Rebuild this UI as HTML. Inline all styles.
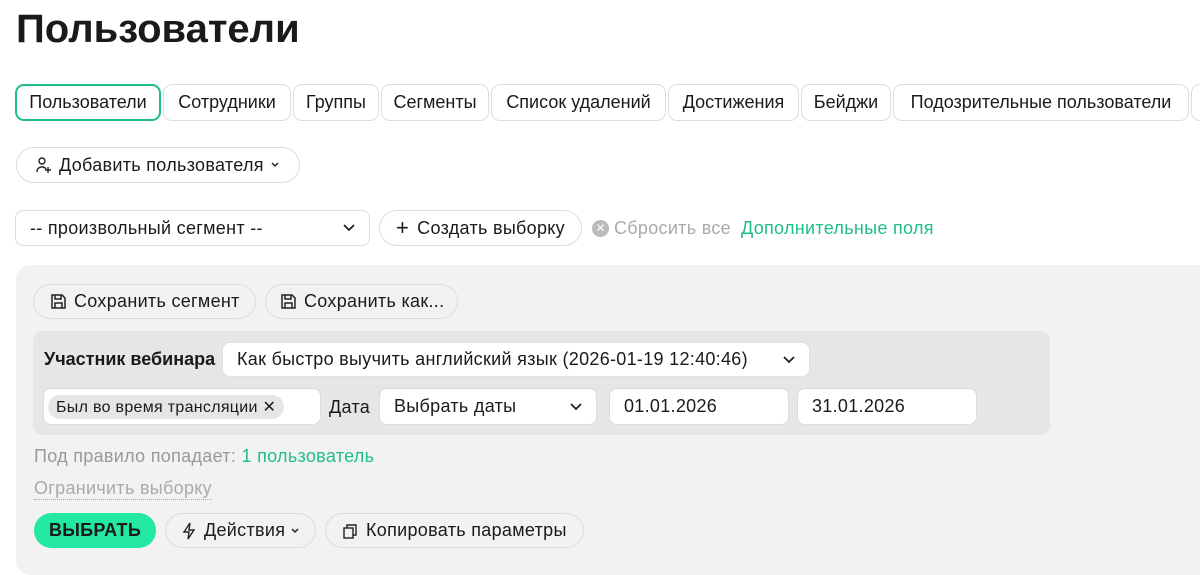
<!DOCTYPE html><html><head><meta charset="utf-8"><style>
*{box-sizing:border-box;margin:0;padding:0}
body{width:1200px;height:563px;overflow:hidden;background:#fff;font-family:"Liberation Sans","DejaVu Sans",sans-serif;color:#1a1a1a;position:relative;letter-spacing:0.3px}
.a{position:absolute}
.b{position:absolute;border:1px solid #dcdcdc;background:#fff;display:flex;align-items:center;font-size:18px;white-space:nowrap}
.tab{height:37px;top:84px;border-radius:9px;justify-content:center}
.pill{border-radius:18px}
.sel{border-radius:8px;padding-left:14px}
.chev{position:absolute;right:14px;top:50%;margin-top:-5px}
</style></head><body>
<div class="a" style="left:16px;top:7px;font-size:40px;font-weight:bold;letter-spacing:0px">Пользователи</div>
<div class="b tab" style="left:15px;width:146px;border:2px solid #1fbf86;letter-spacing:0">Пользователи</div>
<div class="b tab" style="left:163px;width:128px;letter-spacing:0">Сотрудники</div>
<div class="b tab" style="left:293px;width:86px;letter-spacing:0">Группы</div>
<div class="b tab" style="left:381px;width:108px;letter-spacing:0">Сегменты</div>
<div class="b tab" style="left:491px;width:175px;letter-spacing:0">Список удалений</div>
<div class="b tab" style="left:668px;width:131px;letter-spacing:0">Достижения</div>
<div class="b tab" style="left:801px;width:90px;letter-spacing:0">Бейджи</div>
<div class="b tab" style="left:893px;width:296px;letter-spacing:0">Подозрительные пользователи</div>
<div class="b tab" style="left:1191px;width:40px"></div>
<div class="b pill" style="left:16px;top:147px;width:284px;height:36px;padding-left:18px">
<svg width="18" height="18" viewBox="0 0 18 18" fill="none" stroke="#222" stroke-width="1.4" style="margin-right:6px"><circle cx="7" cy="5" r="3"/><path d="M2 16v-1a5 5 0 0 1 9-2M13 11v6M10 14h6"/></svg>Добавить пользователя<svg width="10" height="8" viewBox="0 0 10 8" style="margin-left:6px"><path d="M2 2l3 3 3-3" stroke="#222" stroke-width="1.5" fill="none"/></svg></div>
<div class="b sel" style="left:15px;top:210px;width:355px;height:36px">-- произвольный сегмент --<svg class="chev" width="12" height="10" viewBox="0 0 12 10"><path d="M1 2l5 5 5-5" stroke="#222" stroke-width="1.8" fill="none"/></svg></div>
<div class="b pill" style="left:379px;top:210px;width:203px;height:36px;padding-left:16px"><span style="font-size:22px;margin-right:8px;font-weight:300">+</span>Создать выборку</div>
<div class="a" style="left:592px;top:220px;width:17px;height:17px;border-radius:50%;background:#bbb;color:#fff;font-size:12px;text-align:center;line-height:17px;letter-spacing:0">✕</div>
<div class="a" style="left:614px;top:218px;font-size:18px;color:#aaa">Сбросить все</div>
<div class="a" style="left:741px;top:218px;font-size:18px;color:#1fbf86">Дополнительные поля</div>
<div class="a" style="left:16px;top:265px;width:1200px;height:310px;background:#f2f2f2;border-radius:14px"></div>
<div class="b pill" style="left:33px;top:284px;width:223px;height:35px;padding-left:16px;background:#f2f2f2"><svg width="17" height="17" viewBox="0 0 17 17" fill="none" stroke="#222" stroke-width="1.5" style="margin-right:7px"><path d="M2 2h10l3 3v10H2z"/><path d="M5 2v4h6V2M5 15v-5h7v5"/></svg>Сохранить сегмент</div>
<div class="b pill" style="left:265px;top:284px;width:193px;height:35px;padding-left:14px;background:#f2f2f2"><svg width="17" height="17" viewBox="0 0 17 17" fill="none" stroke="#222" stroke-width="1.5" style="margin-right:7px"><path d="M2 2h10l3 3v10H2z"/><path d="M5 2v4h6V2M5 15v-5h7v5"/></svg>Сохранить как...</div>
<div class="a" style="left:33px;top:331px;width:1017px;height:104px;background:#e6e6e6;border-radius:10px"></div>
<div class="a" style="left:44px;top:349px;font-size:18px;font-weight:bold;letter-spacing:0">Участник вебинара</div>
<div class="b sel" style="left:222px;top:342px;width:588px;height:35px;border-color:#e0e0e0">Как быстро выучить английский язык (2026-01-19 12:40:46)<svg class="chev" width="12" height="10" viewBox="0 0 12 10"><path d="M1 2l5 5 5-5" stroke="#222" stroke-width="1.8" fill="none"/></svg></div>
<div class="b" style="left:43px;top:388px;width:278px;height:37px;border-radius:8px;padding-left:4px"><span style="background:#e6e6e6;border-radius:12px;padding:2px 8px;font-size:16px">Был во время трансляции ✕</span></div>
<div class="a" style="left:329px;top:397px;font-size:18px">Дата</div>
<div class="b sel" style="left:379px;top:388px;width:218px;height:37px">Выбрать даты<svg class="chev" width="12" height="10" viewBox="0 0 12 10"><path d="M1 2l5 5 5-5" stroke="#222" stroke-width="1.8" fill="none"/></svg></div>
<div class="b sel" style="left:609px;top:388px;width:180px;height:37px">01.01.2026</div>
<div class="b sel" style="left:797px;top:388px;width:180px;height:37px">31.01.2026</div>
<div class="a" style="left:34px;top:446px;font-size:18px;color:#999">Под правило попадает: <span style="color:#1fbf86">1 пользователь</span></div>
<div class="a" style="left:34px;top:478px;font-size:18px;color:#aaa;border-bottom:1px dotted #aaa">Ограничить выборку</div>
<div class="a" style="left:34px;top:513px;width:122px;height:35px;border-radius:18px;background:#22e8a2;font-weight:bold;font-size:18px;text-align:center;line-height:35px">ВЫБРАТЬ</div>
<div class="b pill" style="left:165px;top:513px;width:151px;height:35px;padding-left:16px;background:#f2f2f2"><svg width="14" height="18" viewBox="0 0 14 18" fill="none" stroke="#222" stroke-width="1.4" style="margin-right:8px"><path d="M8 1L2 10h5l-1 7 6-9H7z"/></svg>Действия<svg width="10" height="8" viewBox="0 0 10 8" style="margin-left:5px"><path d="M2 2l3 3 3-3" stroke="#222" stroke-width="1.5" fill="none"/></svg></div>
<div class="b pill" style="left:325px;top:513px;width:259px;height:35px;padding-left:16px;background:#f2f2f2"><svg width="16" height="16" viewBox="0 0 16 16" fill="none" stroke="#222" stroke-width="1.4" style="margin-right:8px"><rect x="2" y="5" width="9" height="10"/><path d="M5 5V2h9v10h-3"/></svg>Копировать параметры</div>
</body></html>
